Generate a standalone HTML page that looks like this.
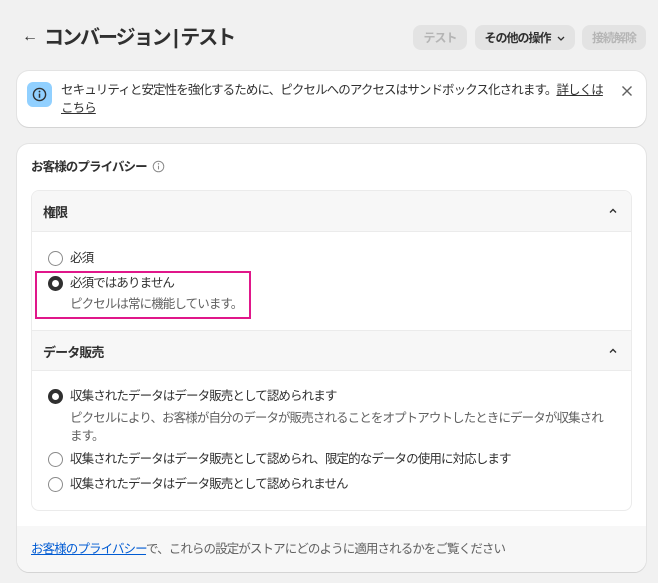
<!DOCTYPE html>
<html><head><meta charset="utf-8"><style>
*{box-sizing:border-box;margin:0;padding:0}
body{width:658px;height:583px;background:#f1f1f1;font-family:"Liberation Sans","Noto Sans CJK JP",sans-serif;color:#303030;font-size:12.5px;letter-spacing:-0.9px;position:relative;overflow:hidden}
.abs{position:absolute}
.btn{position:absolute;top:25px;height:25px;border-radius:8px;font-size:12px;font-weight:bold;display:flex;align-items:center;justify-content:center;letter-spacing:-1px}
.card{position:absolute;left:17px;width:629px;background:#fff;border-radius:12px;box-shadow:0 1px 0 #d4d4d4,0 0 0 1px #e3e3e3}
.radio{position:absolute;width:15px;height:15px;border-radius:50%;border:1px solid #8a8a8a;background:#fff}
.radio.on{border:4px solid #303030}
.t{position:absolute;white-space:nowrap;line-height:16px}
.sub{color:#616161}
.hdr{position:absolute;left:0;width:600px;height:41px;background:#f7f7f7;border-bottom:1px solid #ebebeb}
.hdr b{position:absolute;left:11px;top:11px;font-size:13px}
.chev{position:absolute;right:14px;top:15px}
</style></head><body>
<div class="abs" style="left:22px;top:28px;font-size:16px;letter-spacing:0">←</div>
<div class="abs" style="left:44px;top:24px;font-size:20px;font-weight:bold;line-height:28px;letter-spacing:-2px">コンバージョン | テスト</div>
<div class="btn" style="left:413px;width:54px;background:#e3e3e3;color:#b5b5b5">テスト</div>
<div class="btn" style="left:475px;width:100px;background:#e3e3e3;color:#303030">その他の操作 <svg width="10" height="10" viewBox="0 0 10 10" style="margin-left:5px"><path d="M2 4l3 3 3-3" fill="none" stroke="#303030" stroke-width="1.3"/></svg></div>
<div class="btn" style="left:582px;width:64px;background:#e3e3e3;color:#b5b5b5">接続解除</div>

<div class="card" style="top:71px;height:56px">
  <div class="abs" style="left:10px;top:11px;width:25px;height:25px;border-radius:6px;background:#91d0ff;display:flex;align-items:center;justify-content:center">
    <svg width="15" height="15" viewBox="0 0 16 16"><circle cx="8" cy="8" r="6.5" fill="none" stroke="#303030" stroke-width="1.5"/><path d="M8 7v4.5" stroke="#303030" stroke-width="1.6"/><circle cx="8" cy="4.8" r="1" fill="#303030"/></svg>
  </div>
  <div class="t" style="left:44px;top:11px">セキュリティと安定性を強化するために、ピクセルへのアクセスはサンドボックス化されます。<u>詳しくは</u></div>
  <div class="t" style="left:44px;top:29px"><u>こちら</u></div>
  <svg class="abs" style="left:604px;top:14px" width="12" height="12" viewBox="0 0 12 12"><path d="M1.5 1.5l9 9M10.5 1.5l-9 9" stroke="#616161" stroke-width="1.4"/></svg>
</div>

<div class="card" style="top:144px;height:428px;overflow:hidden">
  <div class="t" style="left:14px;top:15px;font-weight:bold">お客様のプライバシー <svg width="13" height="13" viewBox="0 0 16 16" style="vertical-align:-2px;margin-left:3px"><circle cx="8" cy="8" r="6.5" fill="none" stroke="#8a8a8a" stroke-width="1.2"/><path d="M8 7v4.5" stroke="#8a8a8a" stroke-width="1.3"/><circle cx="8" cy="4.8" r=".9" fill="#8a8a8a"/></svg></div>
  <div class="abs" style="left:14px;top:46px;width:601px;height:321px;border:1px solid #ebebeb;border-radius:8px;overflow:hidden;background:#fff">
    <div class="hdr" style="top:0"><b>権限</b><svg class="chev" width="10" height="10" viewBox="0 0 10 10"><path d="M2 6.5l3-3 3 3" fill="none" stroke="#303030" stroke-width="1.4"/></svg></div>
    <div class="radio" style="left:16px;top:60px"></div>
    <div class="t" style="left:38px;top:59px">必須</div>
    <div class="radio on" style="left:16px;top:85px"></div>
    <div class="t" style="left:38px;top:84px">必須ではありません</div>
    <div class="t sub" style="left:38px;top:105px">ピクセルは常に機能しています。</div>
    <div class="abs" style="left:3px;top:80px;width:216px;height:48px;border:2px solid #e0178a"></div>
    <div class="hdr" style="top:139px;border-top:1px solid #ebebeb"><b>データ販売</b><svg class="chev" width="10" height="10" viewBox="0 0 10 10"><path d="M2 6.5l3-3 3 3" fill="none" stroke="#303030" stroke-width="1.4"/></svg></div>
    <div class="radio on" style="left:16px;top:198px"></div>
    <div class="t" style="left:38px;top:197px">収集されたデータはデータ販売として認められます</div>
    <div class="t sub" style="left:38px;top:219px">ピクセルにより、お客様が自分のデータが販売されることをオプトアウトしたときにデータが収集され</div>
    <div class="t sub" style="left:38px;top:237px">ます。</div>
    <div class="radio" style="left:16px;top:261px"></div>
    <div class="t" style="left:38px;top:260px">収集されたデータはデータ販売として認められ、限定的なデータの使用に対応します</div>
    <div class="radio" style="left:16px;top:286px"></div>
    <div class="t" style="left:38px;top:285px">収集されたデータはデータ販売として認められません</div>
  </div>
  <div class="abs" style="left:0;top:382px;width:629px;height:46px;background:#f7f7f7"></div>
  <div class="t" style="left:14px;top:397px;color:#616161"><u style="color:#005bd3">お客様のプライバシー</u>で、これらの設定がストアにどのように適用されるかをご覧ください</div>
</div>
</body></html>
